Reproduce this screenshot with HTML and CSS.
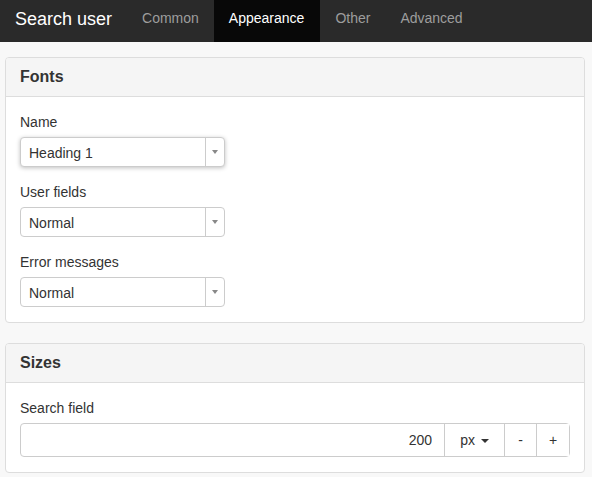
FILE: index.html
```html
<!DOCTYPE html>
<html lang="en">
<head>
<meta charset="UTF-8">
<meta name="viewport" content="width=device-width, initial-scale=1.0">
<title>Search user – Appearance</title>
<link rel="stylesheet" href="styles.css">
</head>
<body>

<nav class="navbar">
    <a class="brand" href="#">Search user</a>
    <ul class="nav">
        <li><a href="#">Common</a></li>
        <li class="active"><a href="#">Appearance</a></li>
        <li><a href="#">Other</a></li>
        <li><a href="#">Advanced</a></li>
    </ul>
</nav>

<div class="content">

    <!-- Fonts -->
    <div class="panel">
        <div class="panel-heading"><h3>Fonts</h3></div>
        <div class="panel-body">
            <div class="form-group">
                <label>Name</label>
                <div class="picker focused">
                    <span class="picker-value">Heading 1</span>
                    <span class="picker-arrow"><i class="caret-sm"></i></span>
                </div>
            </div>
            <div class="form-group">
                <label>User fields</label>
                <div class="picker">
                    <span class="picker-value">Normal</span>
                    <span class="picker-arrow"><i class="caret-sm"></i></span>
                </div>
            </div>
            <div class="form-group">
                <label>Error messages</label>
                <div class="picker">
                    <span class="picker-value">Normal</span>
                    <span class="picker-arrow"><i class="caret-sm"></i></span>
                </div>
            </div>
        </div>
    </div>

    <!-- Sizes -->
    <div class="panel">
        <div class="panel-heading"><h3>Sizes</h3></div>
        <div class="panel-body">
            <div class="form-group">
                <label>Search field</label>
                <div class="input-group">
                    <input class="num" type="text" value="200">
                    <button class="unit">px <i class="caret"></i></button>
                    <button class="step">-</button>
                    <button class="step">+</button>
                </div>
            </div>
        </div>
    </div>

</div>

</body>
</html>
```

FILE: styles.css
```css
*{box-sizing:border-box;}

body{
    margin:0;
    font-family:"Liberation Sans",Arial,sans-serif;
    font-size:14px;
    line-height:20px;
    color:#333;
    background:#f8f8f8;
}

a{text-decoration:none;}

/* Navbar */
.navbar{
    display:flex;
    height:42px;
    background:#2a2a2a;
}

.brand{
    padding:0 15px;
    line-height:38px;
    font-size:18px;
    color:#fff;
}

.nav{
    display:flex;
    margin:0;
    padding:0;
    list-style:none;
}

.nav a{
    display:block;
    padding:0 15px;
    line-height:36px;
    color:#9d9d9d;
}

.nav .active a{
    background:#080808;
    color:#fff;
    height:42px;
    padding:0 16px 0 15px;
}

/* Panels */
.content{
    padding:15px 7px 0 5px;
}

.panel{
    background:#fff;
    border:1px solid #ddd;
    border-radius:4px;
    margin-bottom:20px;
}

.panel-heading{
    background:#f5f5f5;
    border-bottom:1px solid #ddd;
    border-radius:3px 3px 0 0;
    padding:10px 14px;
}

.panel-heading h3{
    margin:0;
    font-size:16px;
    line-height:18px;
    font-weight:bold;
}

.panel-body{
    padding:15px 14px 15px;
}

.form-group{margin-bottom:15px;}
.form-group:last-child{margin-bottom:0;}

label{
    display:block;
    margin-bottom:5px;
}

/* Select-like picker */
.picker{
    display:flex;
    width:205px;
    height:30px;
    border:1px solid #ccc;
    border-radius:4px;
    background:#fff;
}

.picker.focused{
    box-shadow:0 1px 4px rgba(0,0,0,0.25);
}

.picker-value{
    flex:1;
    padding:0 8px;
    line-height:30px;
}

.picker-arrow{
    width:19px;
    border-left:1px solid #ccc;
    display:flex;
    align-items:center;
    justify-content:center;
}

.caret-sm{
    width:0;
    height:0;
    border-left:3px solid transparent;
    border-right:3px solid transparent;
    border-top:4px solid #888;
}

/* Input group */
.input-group{
    display:flex;
    height:34px;
    border:1px solid #ccc;
    border-radius:4px;
    background:#fff;
}

.input-group input{
    flex:1;
    min-width:0;
    border:none;
    background:none;
    padding:0 12px;
    font:inherit;
    color:#333;
    text-align:right;
}

.input-group button{
    border:none;
    border-left:1px solid #ccc;
    background:#fff;
    font:inherit;
    color:#333;
    padding:0;
}

.unit{width:60px;}
.step{width:32px;}
.step:last-child{width:33px;}

.caret{
    display:inline-block;
    width:0;
    height:0;
    margin-left:2px;
    vertical-align:middle;
    border-left:4px solid transparent;
    border-right:4px solid transparent;
    border-top:4px solid #333;
}
```
